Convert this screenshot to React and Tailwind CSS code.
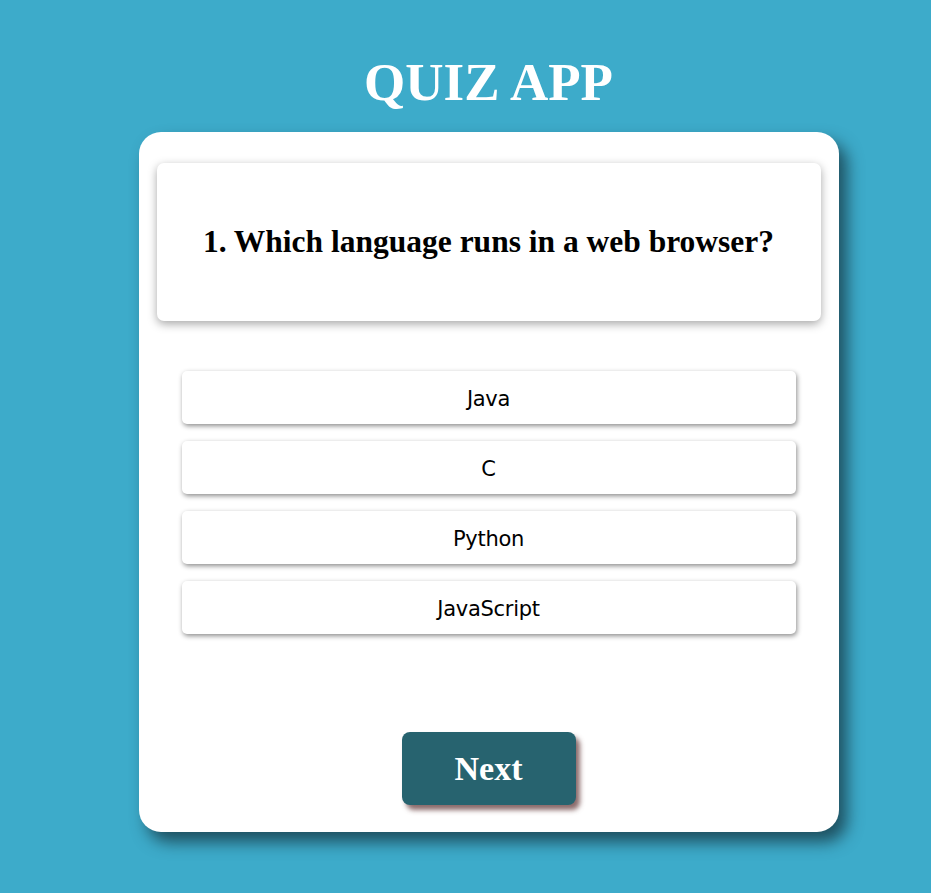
import React from 'react';

const options = ['Java', 'C', 'Python', 'JavaScript'];

const App = () => {
  return (
    <div className="min-h-[893px] bg-[#3dabca] pt-[52px] pl-[46px] flex flex-col items-center">
      <h1 className="text-white text-[53px] leading-[60px] font-bold font-['Liberation_Serif',serif] mb-[20px]">
        QUIZ APP
      </h1>

      <div className="w-[700px] h-[700px] bg-white rounded-[22px] shadow-[8px_10px_16px_rgba(20,50,60,0.75)] pt-[31px] px-[18px] flex flex-col">
        {/* Question */}
        <div className="h-[158px] bg-white rounded-[7px] shadow-[0_3px_10px_rgba(0,0,0,0.35)] flex items-center justify-center">
          <h2 className="text-[31.5px] font-bold text-black font-['Liberation_Serif',serif]">
            1. Which language runs in a web browser?
          </h2>
        </div>

        {/* Options */}
        <div className="mt-[50px] px-[25px] flex flex-col gap-[17px]">
          {options.map((opt) => (
            <button
              key={opt}
              className="h-[53px] pt-[4px] bg-white rounded-[5px] shadow-[1px_2px_5px_rgba(0,0,0,0.45)] text-[21px] text-black font-['DejaVu_Sans',sans-serif] tracking-[-0.3px]"
            >
              {opt}
            </button>
          ))}
        </div>

        {/* Next */}
        <div className="mt-auto mb-[27px] flex justify-center">
          <button className="w-[174px] h-[73px] bg-[#27636f] rounded-[8px] shadow-[4px_5px_5px_rgba(110,70,70,0.8)] text-white text-[34px] font-bold font-['Liberation_Serif',serif]">
            Next
          </button>
        </div>
      </div>
    </div>
  );
};

export default App;
